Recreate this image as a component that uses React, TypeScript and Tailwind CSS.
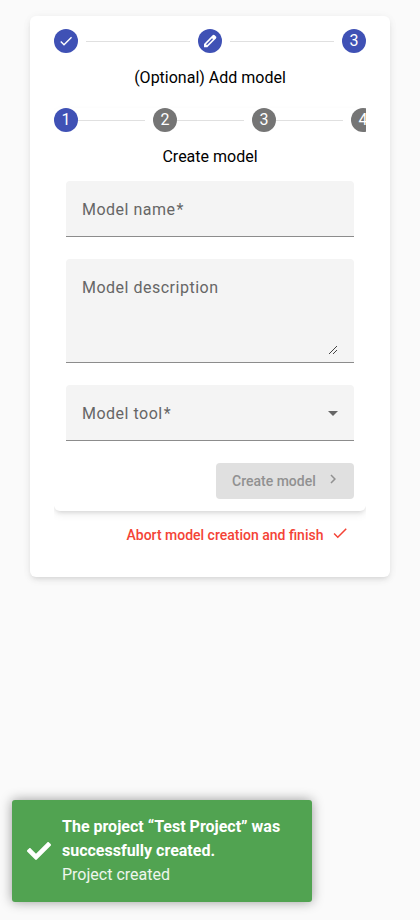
import { MdCheck, MdChevronRight, MdArrowDropDown } from "react-icons/md";
import { FaCheck } from "react-icons/fa";
import type { ReactNode } from "react";

function Dot({ children, muted = false }: { children: ReactNode; muted?: boolean }) {
  return (
    <div
      className={`flex size-6 shrink-0 items-center justify-center rounded-full text-base leading-6 text-white ${
        muted ? "bg-[#757575]" : "bg-[#3f51b5]"
      }`}
    >
      {children}
    </div>
  );
}

function Pencil() {
  return (
    <svg className="size-4" viewBox="0 0 16 16" fill="none">
      <path
        d="M2 14.2v-3.3l8.6-8.6a1.5 1.5 0 0 1 2.1 0l1.2 1.2a1.5 1.5 0 0 1 0 2.1L5.3 14.2z"
        fill="#fff"
      />
      <path d="M4.5 11.7l6-6" stroke="#3f51b5" strokeWidth="1.3" />
    </svg>
  );
}

function Field({
  label,
  children,
  tall = false,
  required = false,
}: {
  label: string;
  children?: ReactNode;
  tall?: boolean;
  required?: boolean;
}) {
  return (
    <div
      className={`flex justify-between rounded-t border-b border-[#8c8c8c] bg-[#f4f4f4] pt-4 pl-4 text-base leading-6 tracking-[0.5px] text-[#666] ${
        tall ? "h-26" : "h-14"
      }`}
    >
      <span className="pt-px">
        {label}
        {required && <span className="ml-px">*</span>}
      </span>
      {children}
    </div>
  );
}

export default function App() {
  return (
    <div className="flex h-[920px] w-[420px] flex-col justify-between bg-[#fafafa] pt-4 pb-[18px] font-['Roboto',sans-serif]">
      <main className="mx-[30px] h-[561px] rounded-md bg-white px-6 pt-[13px] text-black shadow-[0_3px_5px_-2px_rgba(0,0,0,0.1),0_3px_8px_rgba(0,0,0,0.06),0_1px_12px_rgba(0,0,0,0.03)]">
        <div className="flex items-center gap-2">
          <Dot><MdCheck size={16} /></Dot>
          <div className="h-px flex-1 bg-[#e0e0e0]" />
          <Dot><Pencil /></Dot>
          <div className="h-px flex-1 bg-[#e0e0e0]" />
          <Dot>3</Dot>
        </div>
        <h1 className="mt-[13px] text-center text-base leading-6">(Optional) Add model</h1>

        <div className="h-[431px] overflow-hidden pt-[18px] pb-2.5">
          <section className="h-[403px] rounded-md shadow-[0_3px_5px_-2px_rgba(0,0,0,0.14),0_4px_8px_rgba(0,0,0,0.06)]">
            <div className="flex items-center">
              <Dot>1</Dot>
              <div className="mr-2 h-px w-[67px] shrink-0 bg-[#e0e0e0]" />
              <Dot muted>2</Dot>
              <div className="mr-2 h-px w-[67px] shrink-0 bg-[#e0e0e0]" />
              <Dot muted>3</Dot>
              <div className="mr-2 h-px w-[67px] shrink-0 bg-[#e0e0e0]" />
              <Dot muted>4</Dot>
            </div>
            <h2 className="mt-[13px] text-center text-base leading-6">Create model</h2>
            <form className="mt-3 flex flex-col gap-[22px] px-3">
              <Field label="Model name" required />
              <Field label="Model description" tall>
                <svg className="mt-[71px] mr-[17px] size-2" viewBox="0 0 8 8" fill="#444" shapeRendering="crispEdges">
                  <path d="M0 7h1v1H0zM1 6h1v1H1zM2 5h1v1H2zM3 4h1v1H3zM4 3h1v1H4zM5 2h1v1H5zM6 1h1v1H6zM7 0h1v1H7zM4 7h1v1H4zM5 6h1v1H5zM6 5h1v1H6zM7 4h1v1H7z" />
                </svg>
              </Field>
              <Field label="Model tool" required>
                <MdArrowDropDown size={24} className="mr-[9px]" />
              </Field>
              <button type="button" className="flex h-9 w-[138px] justify-between self-end rounded bg-[#e0e0e0] pr-3 pl-4 text-sm leading-9 font-medium text-[#919191]">
                Create model
                <MdChevronRight size={18} className="mt-[7px]" />
              </button>
            </form>
          </section>
        </div>

        <button type="button" className="-mt-1 ml-auto flex h-9 w-[239.5px] justify-between pr-[17px] text-sm leading-9 font-medium text-[#f44336]">
          Abort model creation and finish
          <MdCheck size={18} className="mt-[7px]" />
        </button>
      </main>

      <aside className="ml-3 flex h-[102px] w-[300px] items-center rounded-[3px] bg-[#51a351] pl-[15px] text-base leading-6 text-white shadow-[0_0_12px_#999]">
        <FaCheck size={24} className="mr-[11px] shrink-0" />
        <div>
          <p className="w-[230px] font-bold">The project “Test Project” was successfully created.</p>
          <p className="text-white/90">Project created</p>
        </div>
      </aside>
    </div>
  );
}
